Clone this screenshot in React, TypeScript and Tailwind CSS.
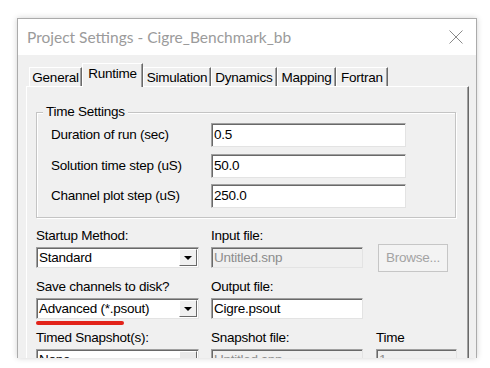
import React from "react";

const tabs = [
  { label: "General", w: "w-[53px]" },
  { label: "Runtime", w: "w-[61px]", active: true },
  { label: "Simulation", w: "w-[68px]" },
  { label: "Dynamics", w: "w-[66px]" },
  { label: "Mapping", w: "w-[59px]" },
  { label: "Fortran", w: "w-[52px]" },
];

const sunken =
  "border border-t-[#a0a0a0] border-l-[#a0a0a0] border-r-[#e3e3e3] border-b-[#e3e3e3] shadow-[inset_1px_1px_0_#696969]";

function TextBox({ value, disabled, className = "" }: { value: string; disabled?: boolean; className?: string }) {
  return (
    <div
      className={`${sunken} flex items-center pl-[2px] ${
        disabled ? "bg-[#f0f0f0] text-[#8d8d8d]" : "bg-white text-black"
      } ${className}`}
    >
      {value}
    </div>
  );
}

function Combo({ value, disabled }: { value: string; disabled?: boolean }) {
  return (
    <div className={`${sunken} flex items-center h-[21px] w-[163px] bg-white pl-[2px] pr-[1px]`}>
      <span className="flex-1">{value}</span>
      <div
        className={`w-[18px] h-[17px] flex items-center justify-center border border-t-white border-l-white border-r-[#696969] border-b-[#696969] ${
          disabled ? "bg-[#e9e9e9]" : "bg-[#f0f0f0]"
        }`}
      >
        {!disabled && (
          <svg width="8" height="4" viewBox="0 0 8 4">
            <path d="M0 0h8L4 4z" fill="#000" />
          </svg>
        )}
      </div>
    </div>
  );
}

export default function App() {
  return (
    <div className="w-[490px] h-[368px] bg-white pl-[17px] pt-[18px] overflow-hidden font-['Liberation_Sans',Arial,sans-serif] text-[13.5px] tracking-[-0.25px] leading-[16px] text-black">
      <div className="w-[460px] h-[340px] border border-b-0 border-[#ababab] shadow-[0_0_6px_rgba(0,0,0,0.18)] bg-[#f0f0f0] overflow-hidden flex flex-col">
        {/* title bar */}
        <div className="h-[36px] shrink-0 bg-white flex items-center justify-between pl-[9px] pr-[13px]">
          <span className="font-['Lato',sans-serif] text-[15.5px] tracking-normal text-[#9b9b9b] leading-[20px]">
            Project Settings - Cigre_Benchmark_bb
          </span>
          <svg width="14" height="14" viewBox="0 0 14 14">
            <path d="M0.5 0.5L13.5 13.5M13.5 0.5L0.5 13.5" stroke="#8a8a8a" strokeWidth="1" />
          </svg>
        </div>

        <div className="px-[8px] pt-[8px]">
          {/* tabs */}
          <div className="flex items-end h-[23px] pl-[3px]">
            {tabs.map((t) =>
              t.active ? (
                <div
                  key={t.label}
                  className={`${t.w} h-[24px] -mb-[1px] relative z-10 bg-[#f0f0f0] border-t border-l border-t-white border-l-white border-r border-r-[#696969] shadow-[inset_-1px_0_0_#a0a0a0] text-center pt-[2px]`}
                >
                  {t.label}
                </div>
              ) : (
                <div
                  key={t.label}
                  className={`${t.w} h-[19px] bg-[#f0f0f0] border-t border-l border-t-white border-l-white border-r border-r-[#696969] shadow-[inset_-1px_0_0_#a0a0a0] text-center pt-[2px]`}
                >
                  {t.label}
                </div>
              )
            )}
          </div>

          {/* panel */}
          <div className="w-[443px] h-[300px] border-t border-l border-t-white border-l-white border-r border-r-[#696969] shadow-[inset_-1px_0_0_#a0a0a0] pl-[9px] pt-[25px]">
            {/* Time Settings group */}
            <div className="relative w-[420px] h-[106px] border border-[#c4c4c4] shadow-[inset_1px_1px_0_#fff,1px_1px_0_#fff] pl-[14px] pt-[10px] flex flex-col gap-[6.5px]">
              <span className="absolute left-[6px] -top-[9px] px-[3px] bg-[#f0f0f0]">Time Settings</span>
              {[
                ["Duration of run (sec)", "0.5"],
                ["Solution time step (uS)", "50.0"],
                ["Channel plot step (uS)", "250.0"],
              ].map(([l, v]) => (
                <div key={l} className="flex items-center h-[24px]">
                  <span className="w-[160px]">{l}</span>
                  <TextBox value={v} className="w-[195px] h-[24px]" />
                </div>
              ))}
            </div>

            {/* lower grid */}
            <div className="grid grid-cols-[175px_165px_81px] mt-[10px]">
              <div className="flex flex-col">
                <span className="h-[16px]">Startup Method:</span>
                <div className="mt-[3px]">
                  <Combo value="Standard" />
                </div>
              </div>
              <div className="flex flex-col">
                <span className="h-[16px]">Input file:</span>
                <TextBox value="Untitled.snp" disabled className="mt-[3px] w-[152px] h-[21px]" />
              </div>
              <div className="h-[40px] pt-[16px] pl-[2px]">
                <div className="w-[70px] h-[28px] flex items-center justify-center bg-[#f3f3f3] border border-[#c6c6c6] text-[#a3a3a3]">
                  Browse...
                </div>
              </div>

              <div className="flex flex-col mt-[11px]">
                <span className="h-[16px]">Save channels to disk?</span>
                <div className="mt-[3px] relative">
                  <Combo value="Advanced (*.psout)" />
                  <div className="absolute left-0 top-full mt-[2px] w-[88px] h-[4px] rounded-full bg-[#e2231a]" />
                </div>
              </div>
              <div className="flex flex-col mt-[11px]">
                <span className="h-[16px]">Output file:</span>
                <TextBox value="Cigre.psout" className="mt-[3px] w-[152px] h-[21px]" />
              </div>
              <div />

              <div className="flex flex-col mt-[11px]">
                <span className="h-[16px]">Timed Snapshot(s):</span>
                <div className="mt-[3px]">
                  <Combo value="None" disabled />
                </div>
              </div>
              <div className="flex flex-col mt-[11px]">
                <span className="h-[16px]">Snapshot file:</span>
                <TextBox value="Untitled.snp" disabled className="mt-[3px] w-[152px] h-[21px]" />
              </div>
              <div className="flex flex-col mt-[11px]">
                <span className="h-[16px]">Time</span>
                <TextBox value="1" disabled className="mt-[3px] w-[81px] h-[21px]" />
              </div>
            </div>
          </div>
        </div>
      </div>
    </div>
  );
}
